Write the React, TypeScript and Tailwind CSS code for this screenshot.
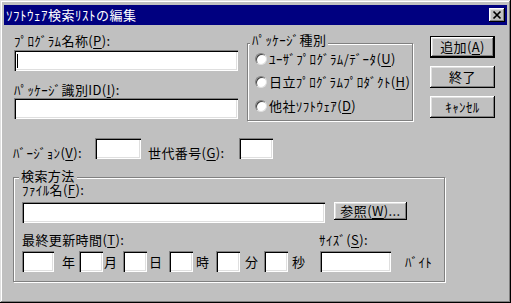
import React from "react";

const RAISED =
  "bg-[#c0c0c0] shadow-[inset_-1px_-1px_0_#000,inset_1px_1px_0_#fff,inset_-2px_-2px_0_#808080,inset_2px_2px_0_#dfdfdf]";
const SUNKEN =
  "bg-white shadow-[inset_1px_1px_0_#808080,inset_2px_2px_0_#000,inset_-1px_-1px_0_#fff,inset_-2px_-2px_0_#dfdfdf]";
const ETCHED =
  "border border-[#808080] shadow-[1px_1px_0_#fff,inset_1px_1px_0_#fff]";

function M({ c }: { c: string }) {
  return <span className="underline underline-offset-[2px] decoration-1">{c}</span>;
}

function Radio({ children, className = "" }: { children: React.ReactNode; className?: string }) {
  return (
    <div className={`flex items-center h-[16px] ${className}`}>
      <div className="w-[12px] h-[12px] rounded-full bg-white border border-t-[#808080] border-l-[#808080] border-b-[#dfdfdf] border-r-[#dfdfdf] shadow-[inset_1px_1px_0_#404040]" />
      <span className="ml-[2px] leading-[16px]">{children}</span>
    </div>
  );
}

export default function App() {
  return (
    <div className="w-[511px] h-[303px] bg-[#c0c0c0] pt-[5px] px-[4px] text-black text-[13px] tracking-[0.4px] font-['Noto_Sans_CJK_JP',sans-serif] shadow-[inset_-1px_-1px_0_#000,inset_1px_1px_0_#dfdfdf,inset_-2px_-2px_0_#808080,inset_2px_2px_0_#fff]">
      {/* title bar */}
      <div className="h-[20px] bg-[#000080] flex items-center justify-between pl-[2px] pr-[2px]">
        <span className="text-white leading-[16px] tracking-[0.5px]">ｿﾌﾄｳｪｱ検索ﾘｽﾄの編集</span>
        <div className={`w-[16px] h-[14px] ${RAISED} flex items-center justify-center`}>
          <svg width="16" height="14" viewBox="0 0 16 14">
            <path d="M4.5 3.5 L11.5 10.5 M11.5 3.5 L4.5 10.5" stroke="#000" strokeWidth="1.7" />
          </svg>
        </div>
      </div>

      {/* body */}
      <div className="pl-[9px] flex flex-col">
        <div className="flex items-start">
          {/* left column */}
          <div className="ml-[1px] mt-[8px] w-[224px] flex flex-col">
            <div className="h-[16px] leading-[16px]">
              ﾌﾟﾛｸﾞﾗﾑ名称(<M c="P" />):
            </div>
            <div className={`mt-[1px] h-[21px] ${SUNKEN} flex items-center pl-[3px]`}>
              <div className="w-px h-[14px] bg-black" />
            </div>
            <div className="mt-[11px] h-[16px] leading-[16px]">
              ﾊﾟｯｹｰｼﾞ識別ID(<M c="I" />):
            </div>
            <div className={`h-[21px] ${SUNKEN}`} />
          </div>

          {/* package kind group */}
          <div className={`relative ml-[9px] mt-[18px] w-[166px] h-[78px] ${ETCHED} pl-[7px] pt-[7px]`}>
            <span className="absolute top-[-12px] left-[2px] px-[2px] bg-[#c0c0c0] leading-[16px]">ﾊﾟｯｹｰｼﾞ種別</span>
            <Radio>
              ﾕｰｻﾞﾌﾟﾛｸﾞﾗﾑ/ﾃﾞｰﾀ(<M c="U" />)
            </Radio>
            <Radio className="mt-[7px]">
              日立ﾌﾟﾛｸﾞﾗﾑﾌﾟﾛﾀﾞｸﾄ(<M c="H" />)
            </Radio>
            <Radio className="mt-[8px]">
              他社ｿﾌﾄｳｪｱ(<M c="D" />)
            </Radio>
          </div>

          {/* buttons */}
          <div className="ml-[17px] mt-[11px] flex flex-col gap-[8px]">
            <div className={`w-[65px] h-[22px] border border-black ${RAISED} flex items-center justify-center leading-[16px]`}>
              追加(<M c="A" />)
            </div>
            <div className={`w-[65px] h-[22px] ${RAISED} flex items-center justify-center leading-[16px]`}>終了</div>
            <div className={`w-[65px] h-[22px] ${RAISED} flex items-center justify-center leading-[16px]`}>ｷｬﾝｾﾙ</div>
          </div>
        </div>

        {/* version row */}
        <div className="mt-[17px] flex items-end h-[21px]">
          <span className="w-[82px] h-[16px] leading-[16px] mb-[-2px]">
            ﾊﾞｰｼﾞｮﾝ(<M c="V" />):
          </span>
          <div className={`w-[46px] h-[21px] ${SUNKEN}`} />
          <span className="ml-[7px] w-[91px] h-[16px] leading-[16px] mb-[-2px]">
            世代番号(<M c="G" />):
          </span>
          <div className={`w-[34px] h-[21px] ${SUNKEN}`} />
        </div>

        {/* search method group */}
        <div className={`relative mt-[18px] w-[432px] h-[105px] ${ETCHED} pl-[8px] pt-[5px] flex flex-col`}>
          <span className="absolute top-[-9px] left-[5px] px-[2px] bg-[#c0c0c0] leading-[14px]">検索方法</span>
          <div className="h-[14px] leading-[14px]">
            ﾌｧｲﾙ名(<M c="F" />):
          </div>
          <div className="mt-[5px] flex items-start">
            <div className={`w-[303px] h-[21px] ${SUNKEN}`} />
            <div className={`ml-[9px] w-[73px] h-[18px] ${RAISED} flex items-center justify-center leading-[16px]`}>
              参照(<M c="W" />)...
            </div>
          </div>
          <div className="mt-[9px] flex h-[16px] leading-[16px]">
            <span className="w-[297px]">
              最終更新時間(<M c="T" />):
            </span>
            <span>
              ｻｲｽﾞ(<M c="S" />):
            </span>
          </div>
          <div className="mt-[3px] flex items-center h-[21px] leading-[16px]">
            <div className={`w-[32px] h-[21px] ${SUNKEN}`} />
            <span className="ml-[8px] w-[13px]">年</span>
            <div className={`ml-[4px] w-[24px] h-[21px] ${SUNKEN}`} />
            <span className="ml-[1px] w-[13px]">月</span>
            <div className={`ml-[6px] w-[24px] h-[21px] ${SUNKEN}`} />
            <span className="ml-[2px] w-[13px]">日</span>
            <div className={`ml-[7px] w-[24px] h-[21px] ${SUNKEN}`} />
            <span className="ml-[3px] w-[13px]">時</span>
            <div className={`ml-[7px] w-[24px] h-[21px] ${SUNKEN}`} />
            <span className="ml-[5px] w-[13px]">分</span>
            <div className={`ml-[6px] w-[24px] h-[21px] ${SUNKEN}`} />
            <span className="ml-[4px] w-[13px]">秒</span>
            <div className={`ml-[15px] w-[71px] h-[21px] ${SUNKEN}`} />
            <span className="ml-[14px]">ﾊﾞｲﾄ</span>
          </div>
        </div>
      </div>
    </div>
  );
}
